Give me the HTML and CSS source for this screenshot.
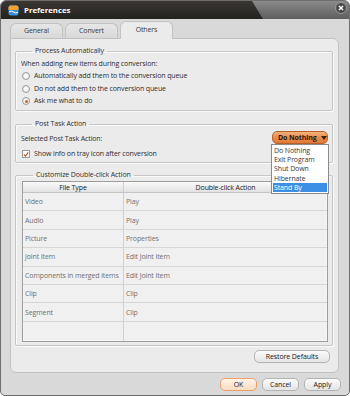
FILE: index.html
```html
<!DOCTYPE html>
<html>
<head>
<meta charset="utf-8">
<link rel="stylesheet" href="styles.css">
</head>
<body>
<div class="window">
  <div class="titlebar">
    <svg class="app-icon" width="11" height="11" viewBox="0 0 11 11">
      <rect x="0.5" y="0.5" width="10" height="10" rx="2" fill="#3a8fd8"/>
      <path d="M0.5 5 L10.5 5 L10.5 2.5 Q10.5 0.5 8.5 0.5 L2.5 0.5 Q0.5 0.5 0.5 2.5 Z" fill="#f0a030"/>
      <path d="M1 7 Q3 5 5.5 7 Q8 9 10 7" stroke="#ffffff" stroke-width="1" fill="none"/>
    </svg>
    <span class="title">Preferences</span>
    <div class="title-right"></div>
    <div class="close">
      <svg width="12" height="12" viewBox="0 0 12 12">
        <circle cx="6" cy="6" r="5.5" fill="#4a4a4a" stroke="#9a9a9a" stroke-width="1"/>
        <path d="M4 4 L8 8 M8 4 L4 8" stroke="#ffffff" stroke-width="1.4"/>
      </svg>
    </div>
  </div>

  <div class="tabs">
    <div class="tab">General</div>
    <div class="tab">Convert</div>
    <div class="tab active">Others</div>
  </div>

  <div class="panel">
    <fieldset class="group g1">
      <legend>Process Automatically</legend>
      <div class="line">When adding new items during conversion:</div>
      <div class="line opt"><span class="radio"></span>Automatically add them to the conversion queue</div>
      <div class="line opt"><span class="radio"></span>Do not add them to the conversion queue</div>
      <div class="line opt"><span class="radio checked"></span>Ask me what to do</div>
    </fieldset>

    <fieldset class="group g2">
      <legend>Post Task Action</legend>
      <div class="line">Selected Post Task Action:</div>
      <div class="line opt check-line"><span class="checkbox">
        <svg width="7" height="7" viewBox="0 0 7 7"><path d="M1 3.5 L3 5.5 L6 1" stroke="#b05a20" stroke-width="1.3" fill="none"/></svg>
      </span>Show info on tray icon after conversion</div>
      <div class="dropdown">
        <div class="dd-button">Do Nothing <span class="arrow"></span></div>
        <div class="dd-list">
          <div class="dd-item">Do Nothing</div>
          <div class="dd-item">Exit Program</div>
          <div class="dd-item">Shut Down</div>
          <div class="dd-item">Hibernate</div>
          <div class="dd-item sel">Stand By</div>
        </div>
      </div>
    </fieldset>

    <fieldset class="group g3">
      <legend>Customize Double-click Action</legend>
      <div class="table">
        <div class="row head"><div class="c1">File Type</div><div class="c2">Double-click Action</div></div>
        <div class="row"><div class="c1">Video</div><div class="c2">Play</div></div>
        <div class="row"><div class="c1">Audio</div><div class="c2">Play</div></div>
        <div class="row"><div class="c1">Picture</div><div class="c2">Properties</div></div>
        <div class="row"><div class="c1">Joint Item</div><div class="c2">Edit Joint Item</div></div>
        <div class="row"><div class="c1">Components in merged items</div><div class="c2">Edit Joint Item</div></div>
        <div class="row"><div class="c1">Clip</div><div class="c2">Clip</div></div>
        <div class="row"><div class="c1">Segment</div><div class="c2">Clip</div></div>
        <div class="row filler"><div class="c1"></div><div class="c2"></div></div>
      </div>
    </fieldset>

    <div class="restore-row">
      <button class="btn restore">Restore Defaults</button>
    </div>
  </div>

  <div class="footer">
    <button class="btn ok">OK</button>
    <button class="btn">Cancel</button>
    <button class="btn">Apply</button>
  </div>
</div>
</body>
</html>
```

FILE: styles.css
```css
* { box-sizing: border-box; }
html, body { margin: 0; padding: 0; background: #ffffff; }
body {
  font-family: "Open Sans", "Noto Sans", sans-serif;
  font-size: 7px;
  letter-spacing: -0.12px;
  color: #2e2e2e;
}
.window {
  width: 350px;
  height: 396px;
  background: #d9d9d9;
  border: 1px solid #6e6e6e;
  border-radius: 6px 6px 5px 5px;
  overflow: hidden;
  display: flex;
  flex-direction: column;
}
.titlebar {
  height: 18px;
  flex: none;
  position: relative;
  display: flex;
  align-items: center;
  padding-left: 7px;
  background: linear-gradient(#3a3733, #24221f);
}
.title-right {
  position: absolute;
  top: 0; right: 0; bottom: 0;
  width: 97px;
  background: linear-gradient(#8a8a8a, #5e5e5e);
  clip-path: polygon(0 0, 100% 0, 100% 100%, 11px 100%);
}
.app-icon { flex: none; position: relative; z-index: 1; }
.title {
  margin-left: 5px;
  color: #ffffff;
  font-weight: bold;
  font-size: 7.8px;
  letter-spacing: 0;
  position: relative;
  z-index: 1;
}
.close {
  position: absolute;
  right: 2px;
  top: 1px;
  width: 12px;
  height: 12px;
  z-index: 1;
}
.close svg { display: block; }

.tabs {
  height: 19px;
  flex: none;
  display: flex;
  align-items: flex-end;
  gap: 2px;
  padding-left: 9px;
}
.tab {
  width: 53px;
  height: 15px;
  border: 1px solid #c2c2c2;
  border-bottom: none;
  border-radius: 6px 6px 0 0;
  background: linear-gradient(#e6e6e6, #d9d9d9);
  text-align: center;
  line-height: 14px;
  color: #3a3a3a;
}
.tab.active {
  height: 18px;
  background: #ebebeb;
  line-height: 16px;
  position: relative;
  margin-bottom: -1px;
  z-index: 1;
}

.panel {
  flex: none;
  margin-left: 9px;
  width: 329px;
  height: 335px;
  background: #ebebeb;
  border: 1px solid #c2c2c2;
  border-radius: 0 6px 6px 6px;
  padding: 8px 5px 0 4px;
  display: flex;
  flex-direction: column;
}

.group {
  margin: 0;
  border: 1px solid #c6c6c6;
  box-shadow: inset 1px 1px 0 #fafafa, 1px 1px 0 #fafafa;
  border-radius: 2px;
  padding: 0 5px;
  position: relative;
  min-width: 0;
}
.group legend {
  margin-left: 11px;
  padding: 0 3px;
  color: #2e2e2e;
  line-height: 8px;
}
.g1 { height: 64px; padding-top: 3px; }
.g2 { height: 43px; margin-top: 9px; padding-top: 5px; }
.g3 { height: 175px; margin-top: 8px; padding: 2px 5px 0 6px; }

.line {
  height: 12.3px;
  line-height: 12px;
  white-space: nowrap;
}
.opt { display: flex; align-items: center; }
.check-line { margin-top: 3px; }
.radio {
  width: 8px;
  height: 8px;
  border-radius: 50%;
  border: 1px solid #9a9a9a;
  background: radial-gradient(#ffffff, #e6e6e6);
  margin-right: 4px;
  margin-left: 1px;
  flex: none;
  position: relative;
}
.radio.checked::after {
  content: "";
  position: absolute;
  left: 1.5px; top: 1.5px;
  width: 3px; height: 3px;
  border-radius: 50%;
  background: #c86a2a;
}
.checkbox {
  width: 8px;
  height: 8px;
  border: 1px solid #9a9a9a;
  background: #f8f8f8;
  margin-right: 4px;
  margin-left: 1px;
  flex: none;
  display: flex;
  align-items: center;
  justify-content: center;
}
.checkbox svg { display: block; }

.dropdown {
  position: absolute;
  left: 255px;
  top: 3px;
  width: 58px;
  z-index: 5;
}
.dd-button {
  height: 13px;
  margin-left: 1px;
  width: 56px;
  border: 1px solid #b8602a;
  border-radius: 5px;
  background: linear-gradient(#f6b27a, #e8884a 55%, #e27a38);
  color: #2a1a0e;
  font-weight: bold;
  font-size: 7px;
  line-height: 11px;
  padding-left: 5px;
  white-space: nowrap;
}
.arrow {
  display: inline-block;
  width: 0; height: 0;
  border-left: 3px solid transparent;
  border-right: 3px solid transparent;
  border-top: 4px solid #3a2010;
  margin-left: 3px;
  vertical-align: 0px;
}
.dd-list {
  width: 58px;
  background: #ffffff;
  border: 1px solid #8a8a8a;
  padding: 1px;
}
.dd-item {
  height: 9.2px;
  line-height: 9px;
  padding-left: 1px;
  color: #3a3a3a;
  white-space: nowrap;
}
.dd-item.sel {
  background: #3d8fe6;
  color: #ffffff;
}

.table {
  width: 306px;
  height: 161px;
  border: 1px solid #9c9c9c;
  box-shadow: inset 0 0 0 1px #f6f6f6;
  background: #f0f0f0;
  display: flex;
  flex-direction: column;
}
.row {
  display: flex;
  height: 18.4px;
  border-bottom: 1px solid #d6d6d6;
  flex: none;
}
.row.head {
  height: 11px;
  background: linear-gradient(#fafafa, #e2e2e2);
  border-bottom: 1px solid #c4c4c4;
  color: #222;
}
.row.filler { flex: 1; border-bottom: none; }
.c1 {
  width: 101px;
  border-right: 1px solid #d0d0d0;
  padding-left: 2px;
  display: flex;
  align-items: center;
  color: #707070;
  white-space: nowrap;
  overflow: hidden;
}
.c2 {
  flex: 1;
  padding-left: 2px;
  display: flex;
  align-items: center;
  color: #707070;
  white-space: nowrap;
}
.head .c1, .head .c2 {
  justify-content: center;
  color: #222;
  padding-left: 0;
}

.restore-row {
  display: flex;
  justify-content: flex-end;
  margin-top: 4px;
  padding-right: 3px;
}
.btn {
  font-family: inherit;
  font-size: 7px;
  letter-spacing: -0.1px;
  color: #222;
  height: 13px;
  padding: 0;
  border: 1px solid #b4b4b4;
  border-radius: 5px;
  background: linear-gradient(#fbfbfb, #e4e4e4);
  line-height: 11px;
}
.restore { width: 76px; }
.footer {
  display: flex;
  justify-content: flex-end;
  gap: 5px;
  padding-right: 8px;
  margin-top: 5px;
}
.footer .btn { width: 37px; height: 13px; }
.footer .btn.ok {
  border-color: #eea068;
  background: linear-gradient(#fff4ea, #fbdcc2);
}
```
